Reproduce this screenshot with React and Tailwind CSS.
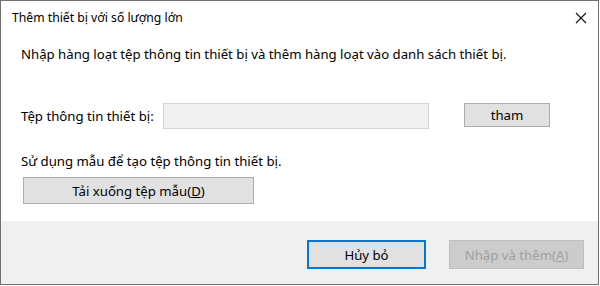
import React from "react";

const font = { fontFamily: '"Noto Sans", "Liberation Sans", sans-serif' };

const App = () => {
  return (
    <div className="w-[600px] h-[286px] bg-white text-black" style={font}>
      <div className="w-[599px] h-[285px] border border-[#707070] flex flex-col text-[13.2px] leading-[16px]">
        {/* title bar */}
        <div className="h-[34px] flex items-center justify-between pl-[11px] pr-[11px] shrink-0 text-[12.2px]">
          <span>Thêm thiết bị với số lượng lớn</span>
          <svg width="12" height="12" viewBox="0 0 12 12">
            <path d="M1 1L11 11M11 1L1 11" stroke="#111" strokeWidth="1.1" fill="none" />
          </svg>
        </div>

        {/* body */}
        <div className="flex flex-col px-[20px]">
          <p className="mt-[11px]">
            Nhập hàng loạt tệp thông tin thiết bị và thêm hàng loạt vào danh sách thiết bị.
          </p>
          <div className="flex items-start mt-[41px]">
            <span className="w-[142px] leading-[26px]">Tệp thông tin thiết bị:</span>
            <div className="w-[266px] h-[26px] bg-[#f0f0f0] border border-[#d4d4d4]" />
            <button
              type="button"
              className="ml-[35px] w-[86px] h-[24px] bg-[#e1e1e1] border border-[#adadad] flex items-center justify-center"
            >
              tham
            </button>
          </div>
          <p className="mt-[24px]">Sử dụng mẫu để tạo tệp thông tin thiết bị.</p>
          <button
            type="button"
            className="mt-[8px] ml-[2px] w-[231px] h-[27px] bg-[#e1e1e1] border border-[#adadad] flex items-center justify-center"
          >
            Tải xuống tệp mẫu(<span className="underline">D</span>)
          </button>
        </div>

        {/* footer */}
        <div className="mt-auto h-[63px] bg-[#f0f0f0] flex items-start justify-end gap-[23px] pt-[19px] pr-[14px]">
          <button
            type="button"
            className="w-[119px] h-[29px] bg-[#e1e1e1] border-2 border-[#0078d7] flex items-center justify-center"
          >
            Hủy bỏ
          </button>
          <button
            type="button"
            className="w-[135px] h-[29px] bg-[#cccccc] border border-[#bfbfbf] text-[#a0a0a0] flex items-center justify-center"
          >
            Nhập và thêm(<span className="underline">A</span>)
          </button>
        </div>
      </div>
    </div>
  );
};

export default App;
